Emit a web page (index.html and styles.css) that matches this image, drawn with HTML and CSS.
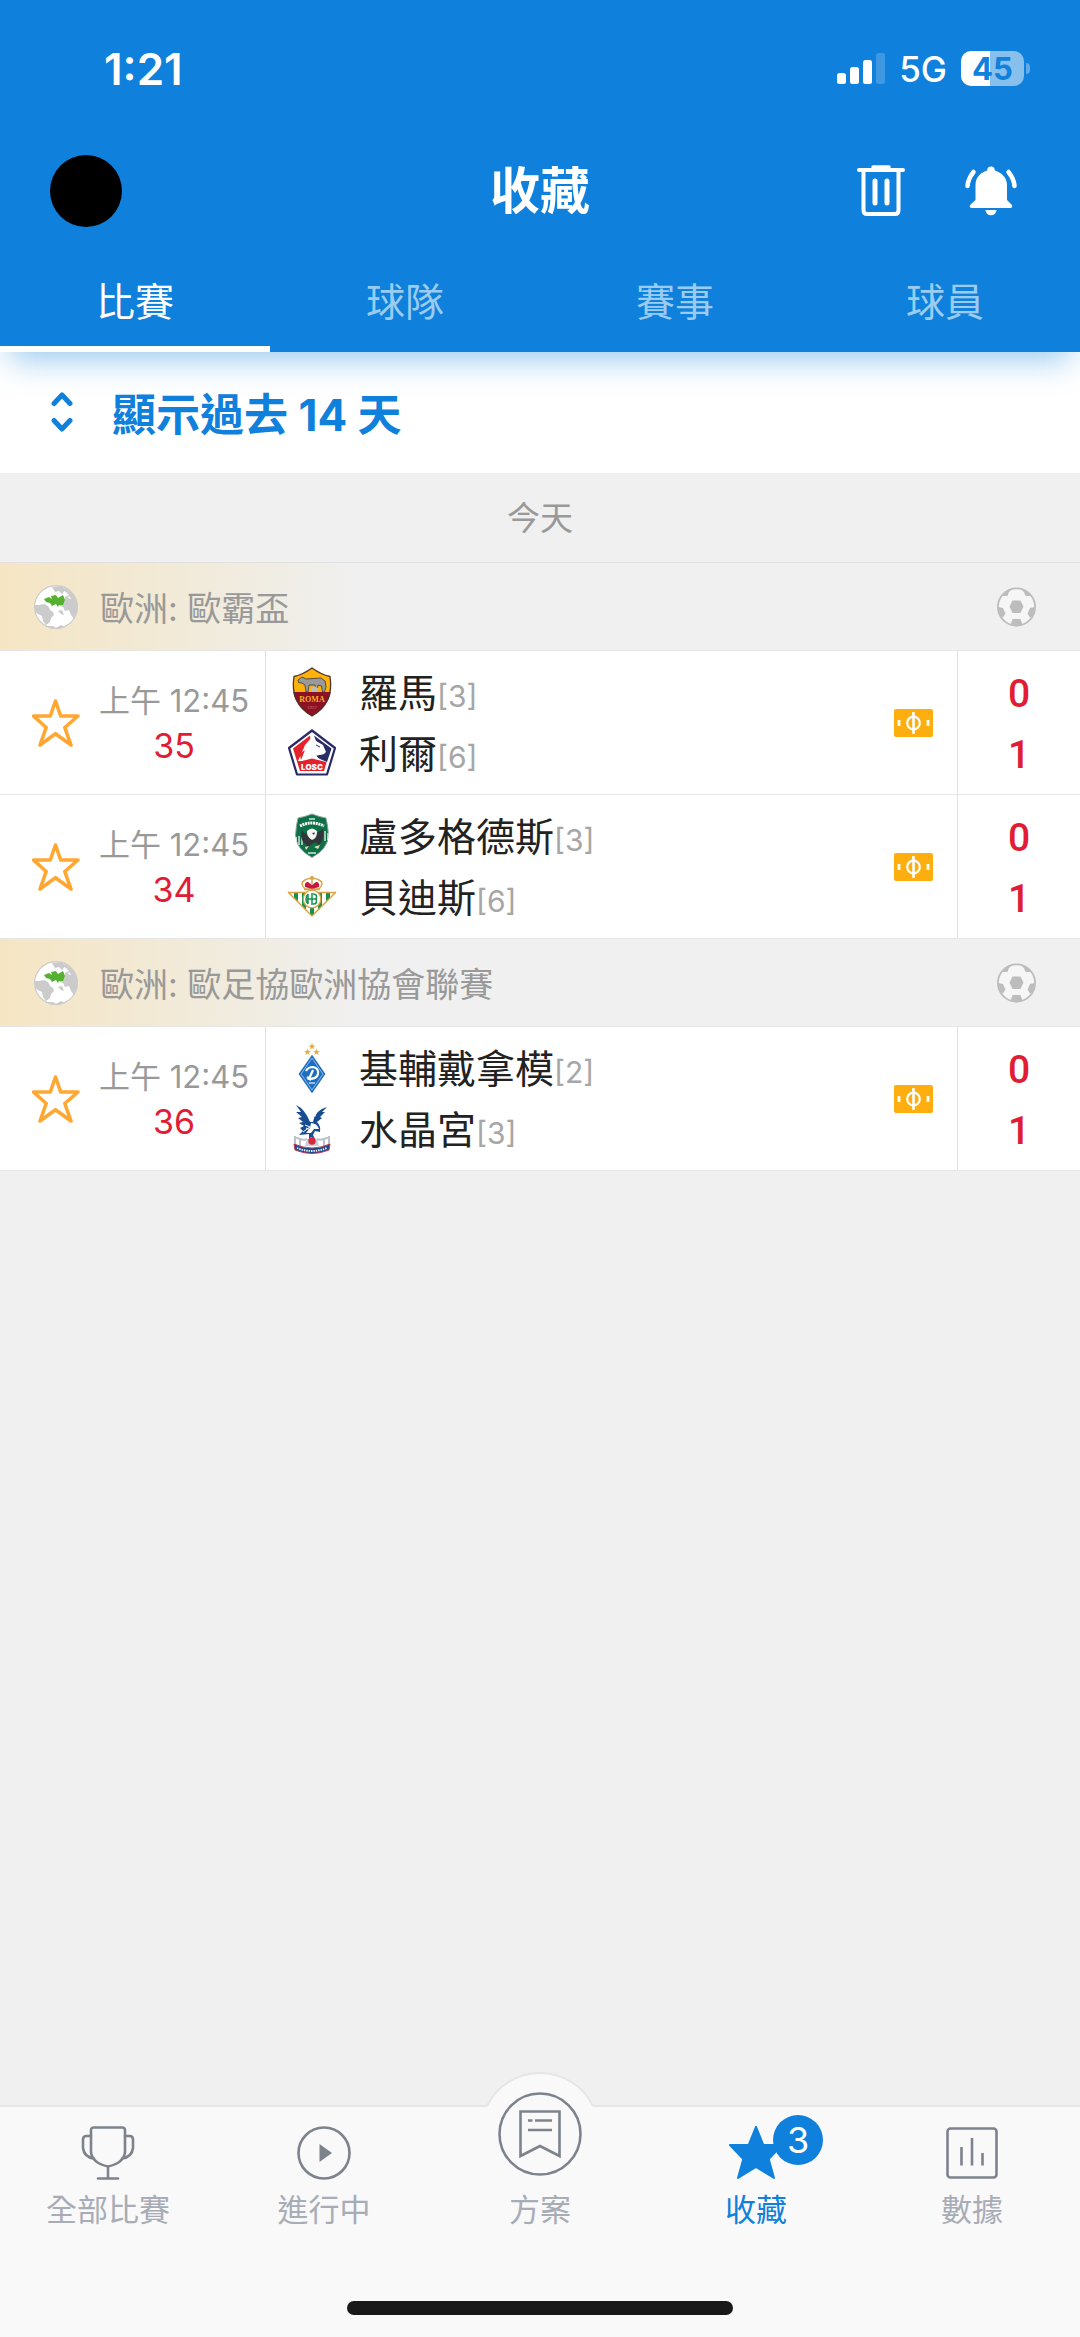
FILE: index.html
```html
<!DOCTYPE html>
<html lang="zh-Hant">
<head>
<meta charset="utf-8">
<meta name="viewport" content="width=device-width, initial-scale=1">
<title>收藏</title>
<link rel="stylesheet" href="styles.css">
</head>
<body>

<svg class="sprite" aria-hidden="true">
  <symbol id="star" viewBox="0 0 48 48">
    <path d="M23.5 2 28.7 17H46L32.8 28.5 39 46 23.5 34.7 8 46 14.2 28.5 1.5 17H18.3Z" fill="none" stroke="#ffa733" stroke-width="3.6" stroke-linejoin="round"/>
  </symbol>
  <symbol id="globe" viewBox="0 0 44 44">
    <circle cx="22" cy="22" r="21.4" fill="#fff" stroke="#cbcbcb" stroke-width="1.2"/>
    <path d="M18 2 26 1 33 4 39 9 43 17 43.400 26 40 34 37 30 35 25 31 26 29 22 24 20 30 18 31 12 35 10 32 7 28 9 25 6 21 7Z" fill="#cbcbcb"/>
    <path d="M1 20 5 20 10 19 14 21 16 25 19 27 20 30 17 33 16 37 12 40 9 36 8 31 4 29 1 27Z" fill="#cbcbcb"/>
    <path d="M24 26 28 25 30 30 27 29Z" fill="#cbcbcb"/>
    <path d="M11 41 19 41 22 43 27 40 31 42 25 44 17 43.500Z" fill="#cbcbcb"/>
    <path d="M10 14 15 12 18 14 17 11 22 10 24 13 29 10 31 15 29 20 25 20 24 22 22 19 18 21 16 18 12 17Z" fill="#54b131"/>
    <path d="M30 6l2 1-1 2-2-1zM35 11l2 3-3-1z" fill="#fff"/>
  </symbol>
  <symbol id="ball" viewBox="0 0 39 40">
    <circle cx="19.500" cy="20" r="18.600" fill="#f6f6f6" stroke="#bdbdbd" stroke-width="1.800"/>
    <path d="M15.500 13.500h8L26.500 19.500 23.500 26h-8L12.500 19.500ZM5 9 12 2.500 16 1.500 12 5 10.500 9ZM34 9 27 2.500 23 1.500 27 5 28.500 9ZM1 20 6 21 8.500 26.500 6 30.500 3 29ZM38 20 33 21 30.500 26.500 33 30.500 36 29ZM15.500 32h8L25.500 38 19.500 39.500 13.500 38Z" fill="#bdbdbd"/>
  </symbol>
  <symbol id="ticket" viewBox="0 0 39 28">
    <rect width="39" height="28" rx="2" fill="#ffae10"/>
    <circle cx="19.500" cy="14" r="6.300" fill="none" stroke="#fff" stroke-width="2.200"/>
    <path d="M19.500 3v22" stroke="#fff" stroke-width="2.600"/>
    <path d="M5 11v6M34 11v6" stroke="#fff" stroke-width="2.800"/>
  </symbol>
</svg>

<header class="header">
  <div class="status">
    <span class="clock">1:21</span>
    <div class="status-right">
      <svg width="48" height="32" viewBox="0 0 48 32" fill="#fff" aria-hidden="true">
        <rect x="0" y="20" width="9" height="11" rx="2.500"/>
        <rect x="13" y="14" width="9" height="17" rx="2.500"/>
        <rect x="26" y="7" width="9" height="24" rx="2.500"/>
        <rect x="39" y="0" width="9" height="31" rx="2.500" opacity=".2"/>
      </svg>
      <span class="network">5G</span>
      <span class="battery">45</span>
    </div>
  </div>

  <div class="titlebar">
    <button class="avatar" type="button" aria-label="帳戶"></button>
    <h1 class="title">收藏</h1>
    <div class="actions">
      <button class="icon-button" type="button" aria-label="刪除">
        <svg width="48" height="52" viewBox="0 0 48 52" fill="none" stroke="#fff" aria-hidden="true">
          <path d="M2 5H46" stroke-width="4" stroke-linecap="round"/>
          <path d="M16 2H32" stroke-width="3.500" stroke-linecap="round"/>
          <path d="M6.500 6V45Q6.500 49 10 49H38Q41.500 49 41.500 45V6" stroke-width="4"/>
          <path d="M18 16V38M30 16V38" stroke-width="5" stroke-linecap="round"/>
        </svg>
      </button>
      <button class="icon-button" type="button" aria-label="通知">
        <svg width="52" height="50" viewBox="0 0 52 50" fill="#fff" aria-hidden="true">
          <path d="M26 0.500a4 4 0 0 1 3.800 4C37 6.500 42 12 42 19V34L47 39Q48 42 45 42H7Q4 42 5 39L10.500 34V19C10.500 12 15 6.500 22.200 4.500A4 4 0 0 1 26 .500Z"/>
          <path d="M20.500 44H31.500A5.500 5.300 0 0 1 20.500 44Z"/>
          <path d="M8.500 6Q3 13 2.500 20M43.500 6Q49 13 49.500 20" fill="none" stroke="#fff" stroke-width="4.500" stroke-linecap="round"/>
        </svg>
      </button>
    </div>
  </div>

  <nav class="tabs" aria-label="收藏類別">
    <a class="tab tab-active" href="#matches" aria-current="page">比賽</a>
    <a class="tab" href="#teams">球隊</a>
    <a class="tab" href="#leagues">賽事</a>
    <a class="tab" href="#players">球員</a>
  </nav>
</header>

<main class="main">
  <button class="history" type="button">
    <svg width="22" height="40" viewBox="0 0 22 40" fill="none" stroke="#0f80db" stroke-width="5" stroke-linecap="round" stroke-linejoin="round" aria-hidden="true">
      <path d="M3 11.500 11 3 19 11.500M3 28.500 11 37 19 28.500"/>
    </svg>
    <span>顯示過去 14 天</span>
  </button>

  <h2 class="day">今天</h2>

  <section>
    <h3 class="league">
      <svg width="44" height="44" aria-hidden="true"><use href="#globe"/></svg>
      <span class="league-name">歐洲: 歐霸盃</span>
      <svg width="39" height="40" aria-hidden="true"><use href="#ball"/></svg>
    </h3>

    <article class="match">
      <div class="when">
        <button class="star" type="button" aria-label="取消收藏"><svg width="48" height="48" aria-hidden="true"><use href="#star"/></svg></button>
        <div class="clockbox"><span class="kickoff">上午 12:45</span><span class="minute">35</span></div>
      </div>
      <div class="fixture">
        <div class="teams">
          <div class="team">
            <svg width="50" height="50" viewBox="0 0 50 50" aria-hidden="true">
              <path d="M25 1Q34 7.500 43 9.500Q45 22 41 32Q36 43 25 49Q14 43 9 32Q5 22 7 9.500Q16 7.500 25 1Z" fill="#fdb10a"/>
              <path d="M6.300 25H43.700Q43.500 29 41 33.500Q36 43 25 49Q14 43 9 33.500Q6.500 29 6.300 25Z" fill="#8e1024"/>
              <path d="M11 13 15 10 19 12 34 11 38 14 39 20 37.500 25H35.500L34.500 19 31 18 30 25H28V18L22 18 21 25H19L18 18 15 16 11.500 15.500Z" fill="#9a9a9a" stroke="#444" stroke-width=".9"/>
              <path d="M24 25V21L26.500 19 31 21V25Z" fill="#bbb"/>
              <text x="25" y="34.500" text-anchor="middle" class="crest-serif" fill="#f5b21b">ROMA</text>
              <text x="25" y="42" text-anchor="middle" class="crest-year" fill="#c87878">1927</text>
              <path d="M25 1Q34 7.500 43 9.500Q45 22 41 32Q36 43 25 49Q14 43 9 32Q5 22 7 9.500Q16 7.500 25 1Z" fill="none" stroke="#4f3528" stroke-width="1.300"/>
            </svg>
            <span class="name">羅馬<span class="rank">[3]</span></span>
          </div>
          <div class="team">
            <svg width="50" height="50" viewBox="0 0 50 50" aria-hidden="true">
              <path d="M25 2.500 48 20 40 46.500H10L2 20Z" fill="#fff" stroke="#2a2a66" stroke-width="2.200" stroke-linejoin="round"/>
              <path d="M23 7.500 6 20.500 13 43H37L39.500 34H25L12 33 17 22 24 15Z" fill="#e3222c"/>
              <path d="M27 7.500 44.500 20.500 40 34 33 31 28 28 37 26 35 18 29 13Z" fill="#2a2a66"/>
              <path d="M25 9 18 17 11 33H18L20 30H31L29 27 37 26 39 24 36 17 29 13Z" fill="#fff"/>
              <path d="M12 23 17 19 14 25 18 22 14 32Z" fill="#e3222c"/>
              <path d="M29 17 33 19" stroke="#2a2a66" stroke-width="1"/>
              <path d="M11 34 25 30.500 39 34 36.500 43H13.500Z" fill="#e3222c"/>
              <text x="25" y="42" text-anchor="middle" class="crest-bold" fill="#fff">LOSC</text>
            </svg>
            <span class="name">利爾<span class="rank">[6]</span></span>
          </div>
        </div>
        <svg width="39" height="28" role="img" aria-label="投注"><use href="#ticket"/></svg>
      </div>
      <div class="score"><span>0</span><span>1</span></div>
    </article>

    <article class="match">
      <div class="when">
        <button class="star" type="button" aria-label="取消收藏"><svg width="48" height="48" aria-hidden="true"><use href="#star"/></svg></button>
        <div class="clockbox"><span class="kickoff">上午 12:45</span><span class="minute">34</span></div>
      </div>
      <div class="fixture">
        <div class="teams">
          <div class="team">
            <svg width="50" height="50" viewBox="0 0 50 50" aria-hidden="true">
              <path d="M25 3Q33 6 39 7Q41 15 41.500 24Q41 38 25 46.500Q9 38 8.500 24Q9 15 11 7Q17 6 25 3Z" fill="#0d7046" stroke="#8fa99c" stroke-width="1"/>
              <path d="M13 15Q25 9 37 15" fill="none" stroke="#fff" stroke-width="3" stroke-dasharray="2 .7"/>
              <path d="M22 8H28M21 42H29" stroke="#cfe5da" stroke-width="1.400"/>
              <path d="M9 26V33M12 25V34M15 26V34M41 22V29M38 20V30" stroke="#fff" stroke-width="1.200"/>
              <path d="M15 19Q18 24 20 22L25 18 30 22 36 18Q38 28 32 34L28 31 25 33 21 36 16 31Q13 26 15 19Z" fill="#30363a"/>
              <path d="M20 20Q25 15 30 20Q30.500 27 25 29Q19.500 26 20 20Z" fill="#f4f4f4"/>
              <path d="M25 22 28 21.500 27 24Z" fill="#30363a"/>
              <path d="M27 36 33 34 31 38ZM18 36 22 35 19 39Z" fill="#e6e0b0"/>
            </svg>
            <span class="name">盧多格德斯<span class="rank">[3]</span></span>
          </div>
          <div class="team">
            <svg width="50" height="50" viewBox="0 0 50 50" aria-hidden="true">
              <path d="M2 21H48L25 44Z" fill="#fff"/>
              <path d="M7 21H11V30L7 26ZM15 21H19V38L15 34ZM31 21H35V34L31 38ZM39 21H43V26L39 30ZM23 34H27V42L25 44 23 42Z" fill="#15914f"/>
              <path d="M1.500 20.500H48.500L25 44Z" fill="none" stroke="#d9a441" stroke-width="1.500" stroke-linejoin="round"/>
              <circle cx="25" cy="27" r="8.800" fill="#fff" stroke="#d9a441" stroke-width="1.300"/>
              <path d="M21 22V32M25 21V33M20 27H30M26 22Q31 22 29 27Q31 32 26 32M21 22Q17 27 21 32" fill="none" stroke="#15914f" stroke-width="1.500"/>
              <path d="M18 17Q12 11 18 8Q22 6 25 7Q28 6 32 8Q38 11 32 17Z" fill="#fff" stroke="#d9a441" stroke-width="1.400"/>
              <path d="M18 15Q17 10 21 10L25 13 29 10Q33 10 32 15L25 17Z" fill="#c8173e"/>
              <path d="M25 4V12M23 5.500H27M17 17.500H33" stroke="#d9a441" stroke-width="1.500"/>
            </svg>
            <span class="name">貝迪斯<span class="rank">[6]</span></span>
          </div>
        </div>
        <svg width="39" height="28" role="img" aria-label="投注"><use href="#ticket"/></svg>
      </div>
      <div class="score"><span>0</span><span>1</span></div>
    </article>
  </section>

  <section>
    <h3 class="league">
      <svg width="44" height="44" aria-hidden="true"><use href="#globe"/></svg>
      <span class="league-name">歐洲: 歐足協歐洲協會聯賽</span>
      <svg width="39" height="40" aria-hidden="true"><use href="#ball"/></svg>
    </h3>

    <article class="match">
      <div class="when">
        <button class="star" type="button" aria-label="取消收藏"><svg width="48" height="48" aria-hidden="true"><use href="#star"/></svg></button>
        <div class="clockbox"><span class="kickoff">上午 12:45</span><span class="minute">36</span></div>
      </div>
      <div class="fixture">
        <div class="teams">
          <div class="team">
            <svg width="50" height="50" viewBox="0 0 50 50" aria-hidden="true">
              <path d="M25 0 26 2.500H28.500L26.500 4 27 6.500 25 5 23 6.500 23.500 4 21.500 2.500H24ZM20.500 5.500l1 2.500H24l-2 1.500.5 2.500-2-1.500-2 1.500.5-2.500-2-1.500h2.500ZM29.500 5.500l1 2.500H33l-2 1.500.5 2.500-2-1.500-2 1.500.5-2.500-2-1.500h2.500Z" fill="#e5ad3b"/>
              <path d="M25 13 37.500 31 25 49 12.500 31Z" fill="#1f6fc1" stroke="#1f6fc1" stroke-width="1.500"/>
              <path d="M25 15 36 31 25 47 14 31Z" fill="none" stroke="#a9cdf0" stroke-width=".8"/>
              <path d="M19 28Q21 24 26 24Q32 25 31 31Q30 36 22 36L26 27M20 34 24 37" fill="none" stroke="#fff" stroke-width="2.200"/>
              <path d="M22 40H28" stroke="#b9d7f2" stroke-width="1.500"/>
            </svg>
            <span class="name">基輔戴拿模<span class="rank">[2]</span></span>
          </div>
          <div class="team">
            <svg width="50" height="50" viewBox="0 0 50 50" aria-hidden="true">
              <path d="M8 32V42M42 32V42M8 33Q16 37 20 35M42 33Q34 37 30 35M13 35V42M37 35V42" fill="none" stroke="#bcc2ca" stroke-width="2"/>
              <path d="M18 42 20 35H30L32 42Z" fill="#c9ced5"/>
              <path d="M9 1Q18 5 23 18L26 18Q28 6 40 3L35 8 38 8 33 13 35 14 30 18Q34 22 33 28L28 27 26 31 28 35 24 33 22 35 22 30 12 31 16 27 13 24 17 22 12 19 16 18 11 14 15 13 9 8 14 8Z" fill="#184d91"/>
              <path d="M24 19Q30 19 32 25L27 25 24 29 19 29 23 24Z" fill="#fff"/>
              <path d="M18 21 23 23 16 28M19 24 24 26M27 11 29 12" fill="none" stroke="#fff" stroke-width="1"/>
              <circle cx="25" cy="37" r="3.700" fill="#d7263f"/>
              <path d="M7 40Q25 48 43 40L42 46Q25 53 8 46Z" fill="#184d91" stroke="#c33b50" stroke-width="1"/>
              <path d="M10 44Q25 50 40 44" fill="none" stroke="#fff" stroke-width="1.800" stroke-dasharray="1.400 1"/>
            </svg>
            <span class="name">水晶宮<span class="rank">[3]</span></span>
          </div>
        </div>
        <svg width="39" height="28" role="img" aria-label="投注"><use href="#ticket"/></svg>
      </div>
      <div class="score"><span>0</span><span>1</span></div>
    </article>
  </section>
</main>

<footer class="bottom">
  <svg class="bump" width="108" height="36" viewBox="0 0 108 36" aria-hidden="true">
    <path d="M1 34A59 59 0 0 1 107 34V36H1Z" fill="#f9f9f9"/>
    <path d="M1 34A59 59 0 0 1 107 34" fill="none" stroke="#e6e6e6" stroke-width="2"/>
  </svg>
  <nav class="menu" aria-label="主選單">
    <a class="item" href="#all">
      <svg width="54" height="54" viewBox="0 0 54 54" fill="none" stroke="#7d828c" stroke-width="2.600" stroke-linecap="round" aria-hidden="true">
        <path d="M13 1.500H41Q44 1.500 44 4V26Q43 37 27 40.500Q11 37 10 26V4Q10 1.500 13 1.500ZM27 40.500V52.500M17 52.500H37"/>
        <path d="M10 10H5.500Q2 10 2 13.500V22Q3 31 13 32.500M44 10H48.500Q52 10 52 13.500V22Q51 31 41 32.500"/>
      </svg>
      <span>全部比賽</span>
    </a>
    <a class="item" href="#live">
      <svg width="54" height="54" viewBox="0 0 54 54" aria-hidden="true">
        <circle cx="27" cy="27" r="25.500" fill="none" stroke="#7d828c" stroke-width="2.600"/>
        <path d="M22.500 18V36L35 27Z" fill="#7d828c"/>
      </svg>
      <span>進行中</span>
    </a>
    <a class="item" href="#plan">
      <svg class="raised" width="84" height="84" viewBox="0 0 84 84" fill="none" stroke="#7d828c" stroke-width="2.600" aria-hidden="true">
        <circle cx="42" cy="42" r="40.500"/>
        <path d="M22.500 19.500H61.500V64L42 54 22.500 64ZM30 28.500H34.500M37 28.500H54M30 38H54"/>
      </svg>
      <span>方案</span>
    </a>
    <a class="item item-active" href="#favorites" aria-current="page">
      <span class="badged">
        <svg width="54" height="54" viewBox="0 0 54 54" fill="#0f80db" stroke="#0f80db" stroke-width="2" stroke-linejoin="round" aria-hidden="true">
          <path d="M27 1 34.300 19H53L39.700 33 45 52 27 41 9 52 14.300 33 1 19H19.700Z"/>
        </svg>
        <span class="badge">3</span>
      </span>
      <span>收藏</span>
    </a>
    <a class="item" href="#data">
      <svg width="54" height="54" viewBox="0 0 54 54" fill="none" stroke="#7d828c" stroke-width="2.600" aria-hidden="true">
        <rect x="2.500" y="2.500" width="49" height="49" rx="3"/>
        <path d="M16.500 21V39.500M27 12V39.500M37.500 27V39.500"/>
      </svg>
      <span>數據</span>
    </a>
  </nav>
  <div class="home-indicator"></div>
</footer>

</body>
</html>
```

FILE: styles.css
```css
* {
  box-sizing: border-box;
}

body {
  margin: 0;
  min-height: 100vh;
  display: flex;
  flex-direction: column;
  background: #f0f0f0;
  color: #222;
  font-family: Inter, "Noto Sans CJK TC", sans-serif;
}

button {
  margin: 0;
  padding: 0;
  border: 0;
  background: none;
  color: inherit;
  font: inherit;
}

a {
  color: inherit;
  text-decoration: none;
}

h1, h2, h3 {
  margin: 0;
  font-weight: 400;
}

svg {
  display: block;
  flex: none;
}

.sprite {
  position: absolute;
  width: 0;
  height: 0;
}

/* Header */

.header {
  position: relative;
  z-index: 1;
  background: #0f80db;
  color: #fff;
  box-shadow: 0 18px 30px -10px rgba(15, 128, 219, 0.42);
}

.status {
  display: flex;
  align-items: center;
  justify-content: space-between;
  height: 137px;
  padding: 0 56px 0 104px;
}

.clock {
  font-size: 44px;
  font-weight: 600;
}

.status-right {
  display: flex;
  align-items: center;
  gap: 14px;
}

.network {
  font-size: 35px;
  font-weight: 500;
}

.battery {
  position: relative;
  width: 63px;
  height: 35px;
  border-radius: 10px;
  background: linear-gradient(90deg, #fff 46%, #87bfed 46%);
  color: #0f80db;
  font-size: 31px;
  font-weight: 700;
  line-height: 35px;
  text-align: center;
}

.battery::after {
  content: "";
  position: absolute;
  top: 12px;
  right: -6px;
  width: 4px;
  height: 11px;
  border-radius: 0 4px 4px 0;
  background: #5faae7;
}

.titlebar {
  display: grid;
  grid-template-columns: 1fr auto 1fr;
  align-items: center;
  height: 107px;
}

.avatar {
  width: 72px;
  height: 72px;
  margin-left: 50px;
  border-radius: 50%;
  background: #000;
}

.title {
  font-size: 50px;
  font-weight: 700;
  line-height: 64px;
}

.actions {
  display: flex;
  align-items: center;
  justify-content: flex-end;
  gap: 60px;
  padding-right: 63px;
}

.tabs {
  display: grid;
  grid-template-columns: repeat(4, 1fr);
}

.tab {
  height: 108px;
  padding-top: 14px;
  border-bottom: 6px solid transparent;
  color: #9accf1;
  font-size: 39px;
  line-height: 88px;
  text-align: center;
}

.tab-active {
  border-color: #fff;
  color: #fff;
}

/* Match list */

.main {
  flex: 1;
}

.history {
  display: flex;
  align-items: center;
  gap: 39px;
  width: 100%;
  height: 121px;
  padding: 0 0 2px 51px;
  background: #fff;
  color: #0f80db;
  font-size: 44px;
  font-weight: 700;
}

.day {
  height: 90px;
  border-bottom: 1px solid #e0e0e0;
  color: #999;
  font-size: 33px;
  line-height: 90px;
  text-align: center;
}

.league {
  display: flex;
  align-items: center;
  gap: 22px;
  height: 88px;
  padding: 0 44px 0 34px;
  border-bottom: 1px solid #e6e6e6;
  background: linear-gradient(90deg, #f5e5c3 0, #f1ece0 240px, #f0f0f0 360px);
  color: #999;
  font-size: 34px;
}

.league-name {
  flex: 1;
}

.match {
  display: grid;
  grid-template-columns: 266px 1fr 122px;
  height: 144px;
  border-bottom: 1px solid #e6e6e6;
  background: #fff;
}

.when {
  display: flex;
  align-items: center;
  gap: 16px;
  padding-left: 32px;
  border-right: 1px solid #e2e2e2;
}

.clockbox {
  display: flex;
  flex-direction: column;
  align-items: center;
  width: 156px;
  line-height: 45px;
}

.kickoff {
  color: #999;
  font-size: 31px;
}

.minute {
  color: #e01d35;
  font-size: 34px;
}

.fixture {
  display: flex;
  align-items: center;
  padding: 0 24px 0 21px;
  border-right: 1px solid #e2e2e2;
}

.teams {
  flex: 1;
}

.team {
  display: flex;
  align-items: center;
  gap: 22px;
  height: 61px;
}

.name {
  padding-top: 5px;
  font-size: 39px;
  line-height: 60px;
}

.rank {
  color: #a6a6a6;
  font-size: 30px;
}

.crest-serif {
  font: 700 8px "Liberation Serif", serif;
}

.crest-year {
  font: 5px "Liberation Serif", serif;
}

.crest-bold {
  font: 900 8px Inter, sans-serif;
}

.score {
  display: flex;
  flex-direction: column;
  align-items: center;
  justify-content: center;
  padding-top: 4px;
  color: #e01d35;
  font-family: Roboto, sans-serif;
  font-size: 39px;
  font-weight: 500;
  line-height: 61px;
}

/* Bottom bar */

.bottom {
  position: relative;
  border-top: 2px solid #e6e6e6;
  background: #f9f9f9;
}

.bump {
  position: absolute;
  top: -35px;
  left: 50%;
  margin-left: -54px;
}

.menu {
  position: relative;
  display: grid;
  grid-template-columns: repeat(5, 1fr);
  padding-top: 19px;
}

.item {
  display: flex;
  flex-direction: column;
  align-items: center;
  gap: 10px;
  color: #a8acb6;
  font-size: 31px;
  line-height: 40px;
}

.item-active {
  color: #0f80db;
}

.raised {
  margin: -34px 0 4px;
}

.badged {
  position: relative;
}

.badge {
  position: absolute;
  top: -11px;
  left: 44px;
  width: 50px;
  height: 50px;
  border-radius: 50%;
  background: #0f80db;
  color: #fff;
  font-size: 36px;
  line-height: 50px;
  text-align: center;
}

.home-indicator {
  width: 386px;
  height: 14px;
  margin: 71px auto 22px;
  border-radius: 7px;
  background: #191919;
}
```
